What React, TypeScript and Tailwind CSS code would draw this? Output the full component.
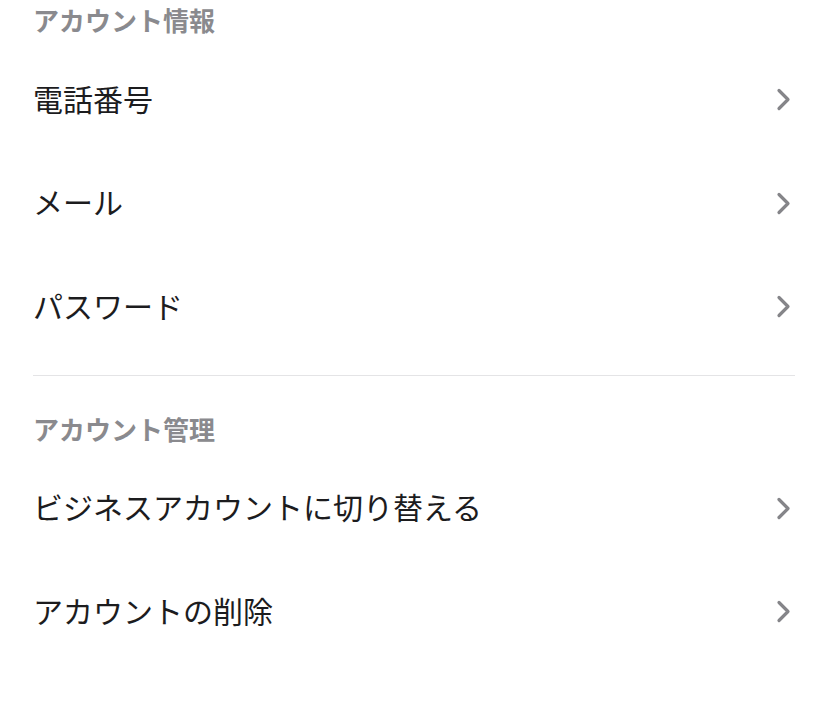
import React from "react";

type Row = { label: string };

const sections: { title: string; rows: Row[] }[] = [
  {
    title: "アカウント情報",
    rows: [{ label: "電話番号" }, { label: "メール" }, { label: "パスワード" }],
  },
  {
    title: "アカウント管理",
    rows: [{ label: "ビジネスアカウントに切り替える" }, { label: "アカウントの削除" }],
  },
];

function Chevron() {
  return (
    <svg width="15" height="23" viewBox="0 0 15 23" fill="none" className="mr-[4px] shrink-0">
      <polyline
        points="3,2.5 12,11.5 3,20.5"
        stroke="#858589"
        strokeWidth="3.2"
        strokeLinecap="round"
        strokeLinejoin="round"
      />
    </svg>
  );
}

export default function App() {
  return (
    <div
      className="w-[828px] h-[712px] bg-white overflow-hidden px-[33px]"
      style={{ fontFamily: '"Noto Sans CJK JP", "Noto Sans", sans-serif' }}
    >
      {sections.map((section, i) => (
        <div key={section.title}>
          {i > 0 && <div className="h-px bg-[#e4e4e6] mt-[16px] mb-[33px]" />}
          <div className="h-[42px] flex items-center text-[26px] font-bold text-[#8a8a8e] leading-none">
            <span className="mb-[2px]">{section.title}</span>
          </div>
          <div className="mt-[6px]">
            {section.rows.map((row) => (
              <div key={row.label} className="h-[103.5px] flex items-center justify-between">
                <span className="text-[30px] text-[#1c1c1e] leading-none mb-[4px]">{row.label}</span>
                <Chevron />
              </div>
            ))}
          </div>
        </div>
      ))}
    </div>
  );
}
